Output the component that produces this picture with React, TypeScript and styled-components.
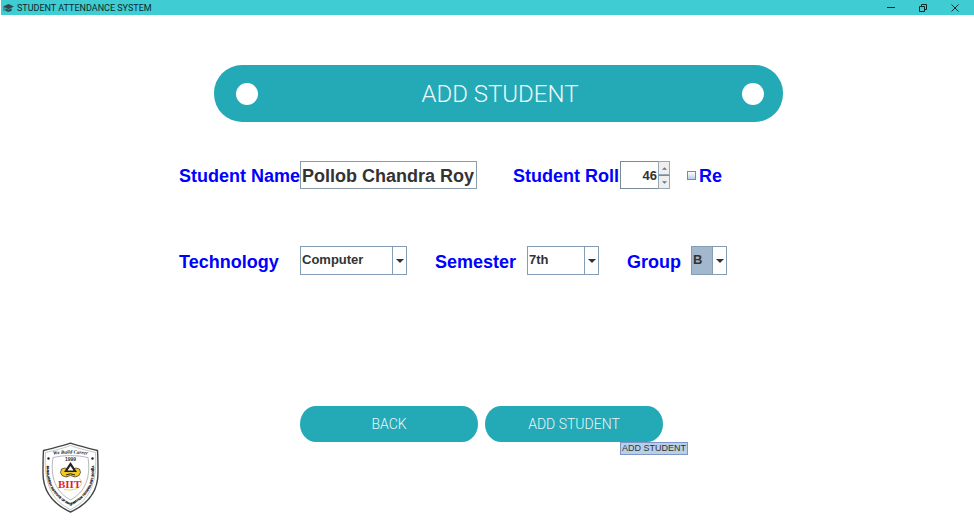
import React, { useState } from "react";
import styled, { createGlobalStyle } from "styled-components";

const teal = "#24a9b7";
const steel = "#7a8a99";
const ink = "#333333";

const GlobalStyle = createGlobalStyle`
  *, *::before, *::after { box-sizing: border-box; }
  body {
    margin: 0;
    background: #ffffff;
    color: ${ink};
    font-family: "Liberation Sans", Arial, sans-serif;
  }
`;

const Page = styled.div`
  display: flex;
  flex-direction: column;
  min-height: 100vh;
`;

const TitleBar = styled.header`
  display: flex;
  align-items: center;
  height: 15px;
  padding: 0 13px 0 2px;
  margin-left: 1px;
  background: #40ccd3;
  color: #0c2a2c;
`;

const AppTitle = styled.span`
  flex: 1;
  margin-left: 3px;
  font: 9px/14px Roboto, sans-serif;
`;

const WindowControls = styled.div`
  display: flex;
  gap: 20px;
`;

const WindowButton = styled.button`
  display: flex;
  align-items: center;
  justify-content: center;
  width: 12px;
  height: 12px;
  padding: 0;
  border: 0;
  background: none;
  color: inherit;
`;

const Main = styled.main`
  display: flex;
  flex-direction: column;
  padding-top: 50px;
`;

const Banner = styled.div`
  display: flex;
  align-items: center;
  justify-content: space-between;
  height: 57px;
  margin: 0 191px 0 214px;
  padding: 0 19px 0 22px;
  border-radius: 28px;
  background: ${teal};
`;

const Dot = styled.span`
  width: 22px;
  height: 22px;
  border-radius: 50%;
  background: #ffffff;
`;

const Heading = styled.h1`
  margin: 0;
  color: #f0fafb;
  font: 300 24px/56px Roboto, sans-serif;
`;

const Form = styled.form`
  display: flex;
  flex-direction: column;
  margin: 39px 0 0 179px;
`;

const Row = styled.div`
  display: flex;
  align-items: center;
  & + & { margin-top: 57px; }
`;

const Field = styled.div<{ $gap: number }>`
  display: flex;
  align-items: center;
  margin-right: ${(p) => p.$gap}px;
`;

const Label = styled.label<{ $width?: number }>`
  width: ${(p) => (p.$width ? `${p.$width}px` : "auto")};
  padding-top: 2px;
  color: #0000ff;
  font-size: 18px;
  font-weight: bold;
  line-height: 26px;
  white-space: nowrap;
`;

const TextBox = styled.input`
  width: 177px;
  height: 28px;
  padding: 2px 1px 0;
  border: 1px solid #8a9cab;
  border-radius: 0;
  background: #ffffff;
  color: ${ink};
  font: bold 18px "Liberation Sans", Arial, sans-serif;
  outline: none;
`;

const Spinner = styled.div`
  display: flex;
  width: 50px;
  height: 28px;
`;

const NumberBox = styled.input`
  flex: 1;
  min-width: 0;
  height: 28px;
  padding: 0 1px 0 0;
  border: 1px solid ${steel};
  border-right: 0;
  border-radius: 0;
  color: ${ink};
  font: bold 13px "Liberation Sans", Arial, sans-serif;
  text-align: right;
  appearance: textfield;
  outline: none;
  &::-webkit-inner-spin-button { appearance: none; margin: 0; }
`;

const Steps = styled.div`
  display: flex;
  flex-direction: column;
  width: 12px;
`;

const Step = styled.button`
  display: flex;
  flex: 1;
  align-items: center;
  justify-content: center;
  padding: 0;
  border: 1px solid #9aa7b3;
  border-radius: 0;
  background: #eeeeee;
  color: #68737d;
  & + & { border-top-color: ${steel}; }
`;

const CheckBox = styled.input`
  width: 9px;
  height: 9px;
  margin: 0 3px 0 0;
  border: 1px solid ${steel};
  border-radius: 0;
  background: linear-gradient(#ffffff, #b8cfe5);
  appearance: none;
  &:checked { background: #5f7f9f; }
`;

const Combo = styled.div<{ $width: number }>`
  display: grid;
  grid-template-columns: 1fr 15px;
  width: ${(p) => p.$width}px;
  height: 29px;
`;

const Select = styled.select<{ $active?: boolean }>`
  grid-area: 1 / 1 / 2 / 3;
  width: 100%;
  height: 29px;
  padding: 0 15px 2px 1px;
  border: 1px solid #849db3;
  border-radius: 0;
  background: ${(p) => (p.$active ? "#a3b8cc" : "#ffffff")};
  color: ${ink};
  font: bold 13px "Liberation Sans", Arial, sans-serif;
  appearance: none;
  outline: none;
`;

const ComboArrow = styled.span`
  z-index: 1;
  display: flex;
  grid-area: 1 / 2;
  align-items: center;
  justify-content: center;
  border: 1px solid #849db3;
  background: #ffffff;
  color: ${ink};
  pointer-events: none;
`;

const Actions = styled.div`
  display: flex;
  gap: 7px;
  margin: 131px 0 0 121px;
`;

const ActionSlot = styled.div`
  position: relative;
`;

const ActionButton = styled.button`
  display: block;
  width: 178px;
  height: 36px;
  padding: 0;
  border: 0;
  border-radius: 16px / 18px;
  background: ${teal};
  color: #e9f7f8;
  font: 300 14px/36px Roboto, sans-serif;
`;

const Tooltip = styled.span`
  position: absolute;
  top: 36px;
  left: 135px;
  padding: 0 1px;
  border: 1px solid #7d95c9;
  background: #b8cfe5;
  color: ${ink};
  font-size: 9px;
  line-height: 11px;
  white-space: nowrap;
`;

const Footer = styled.footer`
  display: flex;
  padding-left: 42px;
`;

const CapIcon = () => (
  <svg width="11" height="10" viewBox="0 0 11 10" aria-hidden="true">
    <path d="M0 3.6 5.5 1 11 3.6 5.5 6.2Z" fill="#31494d" />
    <path d="M2.4 5.2v2.5q3.1 2 6.2 0V5.2L5.5 6.8Z" fill="#31494d" />
    <path d="M1 4v4" stroke="#31494d" strokeWidth=".8" />
  </svg>
);

const Triangle = ({ up = false, wide = false }: { up?: boolean; wide?: boolean }) => (
  <svg width={wide ? 8 : 5} height={wide ? 4 : 3} viewBox="0 0 8 4" aria-hidden="true">
    <path d={up ? "M0 4 4 0 8 4Z" : "M0 0H8L4 4Z"} fill="currentColor" />
  </svg>
);

const shield =
  "M28.500 1.200C21 4 11 6 1.500 8.500C1 15 1 23 1 31C1 50 11 62 28.500 70C46 62 56 50 56 31C56 23 56 15 55.500 8.500C46 6 36 4 28.500 1.200Z";

const Crest = () => (
  <svg width="57" height="72" viewBox="0 0 57 72" overflow="visible" role="img" aria-label="BIIT crest">
    <defs>
      <path id="motto" d="M8 13.500Q28.500 9.500 49 13.500" />
      <path id="rim" d="M5 19C3 42 11 55 28.500 63.500C46 55 54 42 51.500 19" />
    </defs>
    <path d={shield} fill="#fff" stroke="#454545" strokeWidth="1.400" />
    <path
      d="M28.500 3.500C21 6.500 12 8.500 3.500 10.500C2 35 6 57 28.500 67.500C51 57 55 35 53.500 10.500C45 8.500 36 6.500 28.500 3.500Z"
      fill="none"
      stroke="#8e8e8e"
      strokeWidth=".5"
    />
    <path
      d="M11 15.500Q28.500 11.500 46 15.500C49 36 43 50 28.500 58C14 50 8 36 11 15.500Z"
      fill="#fff"
      stroke="#888"
      strokeWidth=".6"
    />
    <text fontFamily="Liberation Serif, serif" fontStyle="italic" fontWeight="bold" fontSize="5" fill="#222">
      <textPath href="#motto" startOffset="50%" textAnchor="middle">We Build Career</textPath>
    </text>
    <text x="28.500" y="19" textAnchor="middle" fontFamily="Liberation Sans, sans-serif" fontWeight="bold" fontSize="5" fill="#333">
      1999
    </text>
    <text fontFamily="Liberation Sans, sans-serif" fontWeight="bold" fontSize="3" fill="#111" stroke="#111" strokeWidth=".2">
      <textPath href="#rim" startOffset="50%" textAnchor="middle">
        BANGLADESH INSTITUTE OF INFORMATION TECHNOLOGY, BOGRA
      </textPath>
    </text>
    <circle cx="6.500" cy="16.500" r="1.200" fill="#222" />
    <circle cx="50.500" cy="16.500" r="1.200" fill="#222" />
    <path
      d="M18.500 30.500 19.500 27 23 26 28.500 28 34 26 37.500 27 38.500 30.500 37 33.500 33 35 28.500 33.500 24 35 20 33.500Z"
      fill="#f3ca20"
      stroke="#312b12"
      strokeWidth=".7"
    />
    <path d="M28.500 20 35 30H22Z" fill="#222" />
    <path d="M28.500 24 31.500 28.500H25.500Z" fill="#fff" />
    <path d="M24 33Q28.500 30.500 33 33" fill="none" stroke="#222" strokeWidth="1" />
    <path d="M37 36Q44 42 34 47Q28 49 22 47.500" fill="none" stroke="#f1db58" strokeWidth="1" />
    <text x="27.500" y="45.500" textAnchor="middle" fontFamily="Liberation Serif, serif" fontWeight="bold" fontSize="11" fill="#e3222b">
      BIIT
    </text>
  </svg>
);

export default function App() {
  const [name, setName] = useState("Pollob Chandra Roy");
  const [roll, setRoll] = useState(46);
  return (
    <Page>
      <GlobalStyle />
      <TitleBar>
        <CapIcon />
        <AppTitle>STUDENT ATTENDANCE SYSTEM</AppTitle>
        <WindowControls>
          <WindowButton aria-label="Minimize">
            <svg width="8" height="8" viewBox="0 0 8 8"><path d="M0 3.500H8" stroke="currentColor" /></svg>
          </WindowButton>
          <WindowButton aria-label="Restore">
            <svg width="8" height="8" viewBox="0 0 8 8" fill="none" stroke="currentColor">
              <path d="M.5 2.500H5.500V7.500H.5ZM2.500 2V.5H7.500V5.500H6" />
            </svg>
          </WindowButton>
          <WindowButton aria-label="Close">
            <svg width="8" height="8" viewBox="0 0 8 8"><path d="M.5.5 7.500 7.500M7.500.5.5 7.500" stroke="currentColor" /></svg>
          </WindowButton>
        </WindowControls>
      </TitleBar>
      <Main>
        <Banner>
          <Dot />
          <Heading>ADD STUDENT</Heading>
          <Dot />
        </Banner>
        <Form onSubmit={(e) => e.preventDefault()}>
          <Row>
            <Field $gap={36}>
              <Label htmlFor="name" $width={121}>Student Name</Label>
              <TextBox id="name" value={name} onChange={(e) => setName(e.target.value)} />
            </Field>
            <Field $gap={17}>
              <Label htmlFor="roll" $width={107}>Student Roll</Label>
              <Spinner>
                <NumberBox id="roll" type="number" value={roll} onChange={(e) => setRoll(Number(e.target.value))} />
                <Steps>
                  <Step type="button" aria-label="Increase roll" onClick={() => setRoll(roll + 1)}><Triangle up /></Step>
                  <Step type="button" aria-label="Decrease roll" onClick={() => setRoll(roll - 1)}><Triangle /></Step>
                </Steps>
              </Spinner>
            </Field>
            <Field $gap={0}>
              <CheckBox id="re" type="checkbox" />
              <Label htmlFor="re">Re</Label>
            </Field>
          </Row>
          <Row>
            <Field $gap={28}>
              <Label htmlFor="technology" $width={121}>Technology</Label>
              <Combo $width={107}>
                <Select id="technology"><option>Computer</option></Select>
                <ComboArrow><Triangle wide /></ComboArrow>
              </Combo>
            </Field>
            <Field $gap={28}>
              <Label htmlFor="semester" $width={92}>Semester</Label>
              <Combo $width={72}>
                <Select id="semester"><option>7th</option></Select>
                <ComboArrow><Triangle wide /></ComboArrow>
              </Combo>
            </Field>
            <Field $gap={0}>
              <Label htmlFor="group" $width={64}>Group</Label>
              <Combo $width={36}>
                <Select id="group" $active><option>B</option></Select>
                <ComboArrow><Triangle wide /></ComboArrow>
              </Combo>
            </Field>
          </Row>
          <Actions>
            <ActionButton type="button">BACK</ActionButton>
            <ActionSlot>
              <ActionButton type="submit" aria-describedby="add-tip">ADD STUDENT</ActionButton>
              <Tooltip id="add-tip" role="tooltip">ADD STUDENT</Tooltip>
            </ActionSlot>
          </Actions>
        </Form>
      </Main>
      <Footer>
        <Crest />
      </Footer>
    </Page>
  );
}
